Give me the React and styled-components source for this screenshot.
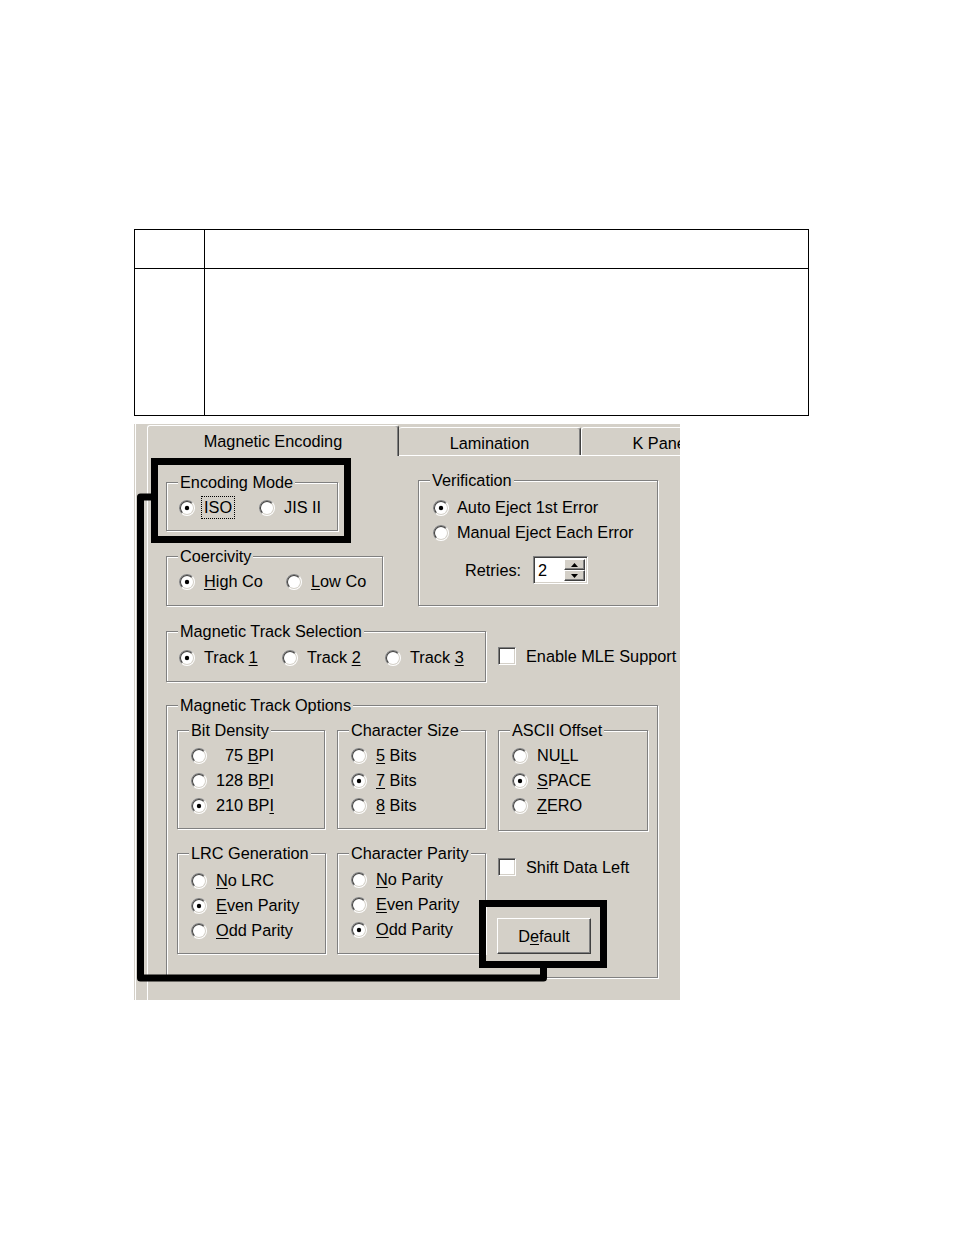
import React from "react";
import styled, { createGlobalStyle } from "styled-components";

const GlobalStyle = createGlobalStyle`
	html, body {
		margin: 0;
		padding: 0;
		background: #ffffff;
	}
	body {
		font-family: "Liberation Sans", Arial, sans-serif;
	}
`;

const Page = styled.div`
	width: 954px;
	min-height: 1235px;
	box-sizing: border-box;
	padding: 229px 0 0 134px;
`;

const Table = styled.div`
	display: grid;
	grid-template-columns: 70px 604px;
	grid-template-rows: 39px 147px;
	width: 675px;
	box-sizing: border-box;
	border-top: 1px solid #000;
	border-left: 1px solid #000;
`;

const Cell = styled.div`
	box-sizing: border-box;
	border-right: 1px solid #000;
	border-bottom: 1px solid #000;
`;

const Dialog = styled.div`
	position: relative;
	width: 546px;
	height: 576px;
	margin-top: 8px;
	padding-left: 13px;
	box-sizing: border-box;
	overflow: hidden;
	background: #d4d0c8;
	box-shadow: inset 1px 0 0 #d4d0c8, inset 2px 0 0 #ffffff;
	font-size: 16.3px;
	color: #000;
`;

const TabStrip = styled.div`
	display: flex;
	align-items: flex-end;
	height: 31px;
`;

const Tab = styled.div`
	position: relative;
	z-index: ${(p) => (p.$active ? 2 : 1)};
	flex-shrink: 0;
	box-sizing: border-box;
	width: ${(p) => p.$w}px;
	height: ${(p) => (p.$active ? 31 : 28)}px;
	margin-bottom: ${(p) => (p.$active ? -1 : 0)}px;
	padding-top: ${(p) => (p.$active ? 0 : 4)}px;
	display: flex;
	align-items: center;
	justify-content: center;
	white-space: nowrap;
	background: #d4d0c8;
	border-top: 1px solid #fff;
	border-left: ${(p) => (p.$noLeft ? "none" : "1px solid #fff")};
	border-right: 1px solid #404040;
	border-radius: 3px 3px 0 0;
	box-shadow: inset -1px 0 0 #808080;
`;

const TabPage = styled.div`
	box-sizing: border-box;
	width: 540px;
	height: 560px;
	border-top: 1px solid #fff;
	border-left: 1px solid #fff;
	padding: 24px 0 0 18px;
`;

const TopRow = styled.div`
	display: flex;
	align-items: flex-start;
`;

const LeftCol = styled.div`
	display: flex;
	flex-direction: column;
	gap: 25px;
	width: 252px;
	margin-top: 2px;
	flex-shrink: 0;
`;

const TrackRow = styled.div`
	display: flex;
	align-items: flex-start;
	margin-top: 25px;
`;

const Group = styled.div`
	position: relative;
	box-sizing: border-box;
	flex-shrink: 0;
	width: ${(p) => p.$w}px;
	height: ${(p) => p.$h}px;
	margin-top: ${(p) => p.$mt || 0}px;
	padding: ${(p) => p.$pt ?? 12}px 0 0 ${(p) => p.$pl ?? 12}px;
	border: 1px solid #808080;
	box-shadow: 1px 1px 0 #fff, inset 1px 1px 0 #fff;
`;

const Legend = styled.span`
	position: absolute;
	top: -10px;
	left: 11px;
	padding: 0 2px;
	line-height: 18px;
	background: #d4d0c8;
	white-space: nowrap;
`;

const Row = styled.div`
	display: flex;
`;

const RadioItem = styled.div`
	display: flex;
	align-items: center;
	flex-shrink: 0;
	height: 25px;
	width: ${(p) => (p.$w ? `${p.$w}px` : "auto")};
	white-space: nowrap;
`;

const Caption = styled.span`
	margin-left: ${(p) => p.$indent || 0}px;
	padding: ${(p) => (p.$focus ? "1px 2px" : 0)};
	outline: ${(p) => (p.$focus ? "1px dotted #000" : "none")};
	line-height: 19px;
`;

const U = styled.span`
	text-decoration: underline;
	text-underline-offset: 2px;
	text-decoration-thickness: 1px;
`;

const RadioSvg = styled.svg`
	flex-shrink: 0;
	width: 16px;
	height: 16px;
	margin-right: ${(p) => p.$gap ?? 9}px;
`;

const CheckRow = styled.div`
	display: flex;
	align-items: center;
	height: 18px;
	margin-top: ${(p) => p.$mt || 0}px;
	margin-left: ${(p) => p.$ml || 0}px;
	white-space: nowrap;
`;

const CheckBox = styled.span`
	flex-shrink: 0;
	box-sizing: border-box;
	width: 18px;
	height: 18px;
	margin-right: 10px;
	background: #fff;
	border: 1px solid;
	border-color: #808080 #fff #fff #808080;
	box-shadow: inset 1px 1px 0 #404040, inset -1px -1px 0 #d4d0c8;
`;

const RetriesRow = styled.div`
	display: flex;
	align-items: center;
	margin: 11px 0 0 32px;
`;

const SpinBox = styled.div`
	display: flex;
	box-sizing: border-box;
	width: 55px;
	height: 28px;
	margin-left: 12px;
	padding: 2px;
	background: #fff;
	border: 1px solid;
	border-color: #808080 #fff #fff #808080;
	box-shadow: inset 1px 1px 0 #404040, inset -1px -1px 0 #d4d0c8;
`;

const SpinEdit = styled.span`
	flex: 1;
	padding-left: 2px;
	line-height: 22px;
`;

const SpinButtons = styled.div`
	display: flex;
	flex-direction: column;
	width: 21px;
`;

const SpinBtn = styled.div`
	flex: 1;
	display: flex;
	align-items: center;
	justify-content: center;
	box-sizing: border-box;
	background: #d4d0c8;
	border: 1px solid;
	border-color: #fff #404040 #404040 #fff;
	box-shadow: inset -1px -1px 0 #808080;
`;

const OptionsGrid = styled.div`
	display: grid;
	grid-template-columns: 148px 149px 150px;
	column-gap: 12px;
	row-gap: 22px;
	align-items: start;
`;

const SideCell = styled.div`
	display: flex;
	flex-direction: column;
	align-items: flex-start;
`;

const Button = styled.div`
	box-sizing: border-box;
	width: 94px;
	height: 36px;
	margin: 42px 0 0 -1px;
	display: flex;
	align-items: center;
	justify-content: center;
	background: #d4d0c8;
	border: 1px solid;
	border-color: #fff #404040 #404040 #fff;
	box-shadow: inset -1px -1px 0 #808080, inset 1px 1px 0 #d4d0c8;
`;

const Callouts = styled.svg`
	position: absolute;
	left: 0;
	top: 0;
	width: 546px;
	height: 576px;
	z-index: 5;
	pointer-events: none;
`;

const RadioIcon = ({ checked, gap }) => (
	<RadioSvg viewBox="0 0 16 16" $gap={gap}>
		<circle cx="8" cy="8" r="8" fill="#fff" />
		<path d="M2.343 13.657A8 8 0 0 1 13.657 2.343Z" fill="#808080" />
		<circle cx="8" cy="8" r="7" fill="#d4d0c8" />
		<path d="M3.05 12.95A7 7 0 0 1 12.95 3.05Z" fill="#404040" />
		<circle cx="8" cy="8" r="6" fill="#fff" />
		{checked && <circle cx="8" cy="8" r="2.2" fill="#000" />}
	</RadioSvg>
);

const Radio = ({ checked, w, indent, focus, gap, children }) => (
	<RadioItem $w={w}>
		<RadioIcon checked={checked} gap={gap} />
		<Caption $indent={indent} $focus={focus}>
			{children}
		</Caption>
	</RadioItem>
);

const Check = ({ mt, ml, children }) => (
	<CheckRow $mt={mt} $ml={ml}>
		<CheckBox />
		<span>{children}</span>
	</CheckRow>
);

const GroupBox = ({ title, w, h, pt, pl, mt, children }) => (
	<Group $w={w} $h={h} $pt={pt} $pl={pl} $mt={mt}>
		<Legend>{title}</Legend>
		{children}
	</Group>
);

const Arrow = ({ up }) => (
	<svg width="7" height="4" viewBox="0 0 7 4">
		<path d={up ? "M3.5 0L7 4H0Z" : "M0 0H7L3.5 4Z"} fill="#000" />
	</svg>
);

const App = () => {
	return (
		<>
			<GlobalStyle />
			<Page>
				<Table>
					<Cell />
					<Cell />
					<Cell />
					<Cell />
				</Table>
				<Dialog>
					<TabStrip>
						<Tab $active $w={252}>
							Magnetic Encoding
						</Tab>
						<Tab $w={182} $noLeft>
							Lamination
						</Tab>
						<Tab $w={160}>K Panel</Tab>
					</TabStrip>
					<TabPage>
						<TopRow>
							<LeftCol>
								<GroupBox title="Encoding Mode" w={172} h={49}>
									<Row>
										<Radio checked w={80} focus gap={7}>
											ISO
										</Radio>
										<Radio>JIS II</Radio>
									</Row>
								</GroupBox>
								<GroupBox title="Coercivity" w={217} h={50}>
									<Row>
										<Radio checked w={107}>
											<U>H</U>igh Co
										</Radio>
										<Radio>
											<U>L</U>ow Co
										</Radio>
									</Row>
								</GroupBox>
							</LeftCol>
							<GroupBox title="Verification" w={240} h={126} pt={14} pl={14}>
								<Radio checked gap={8}>
									Auto Eject 1st Error
								</Radio>
								<Radio gap={8}>Manual Eject Each Error</Radio>
								<RetriesRow>
									<span>Retries:</span>
									<SpinBox>
										<SpinEdit>2</SpinEdit>
										<SpinButtons>
											<SpinBtn>
												<Arrow up />
											</SpinBtn>
											<SpinBtn>
												<Arrow />
											</SpinBtn>
										</SpinButtons>
									</SpinBox>
								</RetriesRow>
							</GroupBox>
						</TopRow>

						<TrackRow>
							<GroupBox title="Magnetic Track Selection" w={320} h={51} pt={13}>
								<Row>
									<Radio checked w={103}>
										Track <U>1</U>
									</Radio>
									<Radio w={103}>
										Track <U>2</U>
									</Radio>
									<Radio>
										Track <U>3</U>
									</Radio>
								</Row>
							</GroupBox>
							<Check mt={16} ml={12}>
								Enable MLE Support
							</Check>
						</TrackRow>

						<GroupBox title="Magnetic Track Options" w={492} h={273} pt={24} pl={10} mt={23}>
							<OptionsGrid>
								<GroupBox title="Bit Density" w={148} h={99} pl={13}>
									<Radio indent={9}>
										75 <U>B</U>PI
									</Radio>
									<Radio>
										128 B<U>P</U>I
									</Radio>
									<Radio checked>
										210 BP<U>I</U>
									</Radio>
								</GroupBox>
								<GroupBox title="Character Size" w={149} h={99} pl={13}>
									<Radio>
										<U>5</U> Bits
									</Radio>
									<Radio checked>
										<U>7</U> Bits
									</Radio>
									<Radio>
										<U>8</U> Bits
									</Radio>
								</GroupBox>
								<GroupBox title="ASCII Offset" w={150} h={101} pl={13}>
									<Radio>
										NU<U>L</U>L
									</Radio>
									<Radio checked>
										<U>S</U>PACE
									</Radio>
									<Radio>
										<U>Z</U>ERO
									</Radio>
								</GroupBox>

								<GroupBox title="LRC Generation" w={149} h={101} pt={14} pl={13}>
									<Radio>
										<U>N</U>o LRC
									</Radio>
									<Radio checked>
										<U>E</U>ven Parity
									</Radio>
									<Radio>
										<U>O</U>dd Parity
									</Radio>
								</GroupBox>
								<GroupBox title="Character Parity" w={149} h={101} pt={13} pl={13}>
									<Radio>
										<U>N</U>o Parity
									</Radio>
									<Radio>
										<U>E</U>ven Parity
									</Radio>
									<Radio checked>
										<U>O</U>dd Parity
									</Radio>
								</GroupBox>
								<SideCell>
									<Check mt={5}>Shift Data Left</Check>
									<Button>
										<span>
											D<U>e</U>fault
										</span>
									</Button>
								</SideCell>
							</OptionsGrid>
						</GroupBox>
					</TabPage>

					{/* black callout frames drawn over the dialog */}
					<Callouts viewBox="0 0 546 576">
						<g fill="none" stroke="#000" strokeWidth="7">
							<rect x="20.5" y="37.5" width="193" height="78" />
							<rect x="348.5" y="479.5" width="121" height="61" />
							<path d="M17 73H6.5V554H409.5V541" strokeLinejoin="round" />
						</g>
					</Callouts>
				</Dialog>
			</Page>
		</>
	);
};

export default App;
